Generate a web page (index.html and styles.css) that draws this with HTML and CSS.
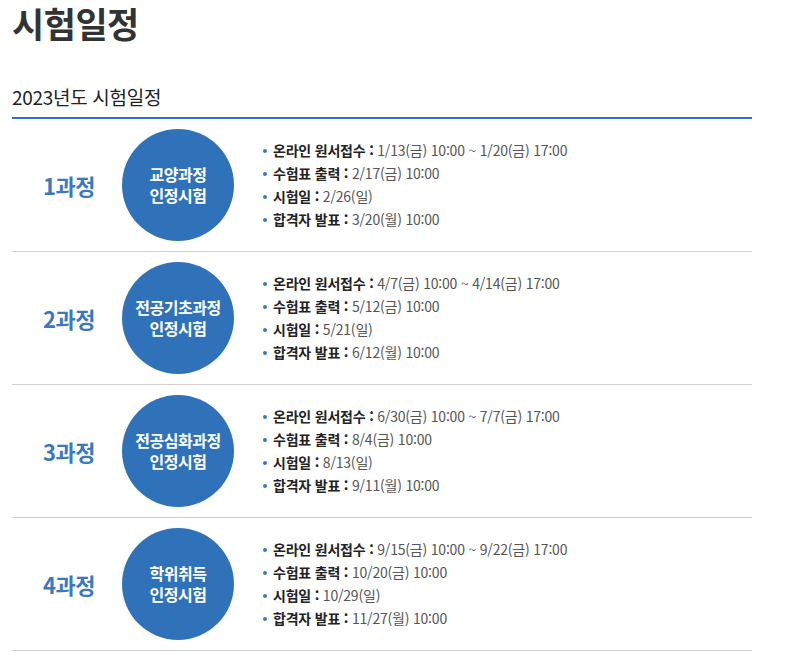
FILE: index.html
```html
<!DOCTYPE html>
<html lang="ko">
<head>
<meta charset="utf-8">
<title>시험일정</title>
<link rel="stylesheet" href="styles.css">
</head>
<body>
<div class="page">
  <h1 class="title">시험일정</h1>
  <h2 class="subtitle">2023년도 시험일정</h2>
  <div class="schedule">
    <div class="row">
      <div class="course">1과정</div>
      <div class="circle"><span>교양과정</span><span>인정시험</span></div>
      <ul class="items">
        <li><b>온라인 원서접수 :</b> 1/13(금) 10:00 ~ 1/20(금) 17:00</li>
        <li><b>수험표 출력 :</b> 2/17(금) 10:00</li>
        <li><b>시험일 :</b> 2/26(일)</li>
        <li><b>합격자 발표 :</b> 3/20(월) 10:00</li>
      </ul>
    </div>
    <div class="row">
      <div class="course">2과정</div>
      <div class="circle"><span>전공기초과정</span><span>인정시험</span></div>
      <ul class="items">
        <li><b>온라인 원서접수 :</b> 4/7(금) 10:00 ~ 4/14(금) 17:00</li>
        <li><b>수험표 출력 :</b> 5/12(금) 10:00</li>
        <li><b>시험일 :</b> 5/21(일)</li>
        <li><b>합격자 발표 :</b> 6/12(월) 10:00</li>
      </ul>
    </div>
    <div class="row">
      <div class="course">3과정</div>
      <div class="circle"><span>전공심화과정</span><span>인정시험</span></div>
      <ul class="items">
        <li><b>온라인 원서접수 :</b> 6/30(금) 10:00 ~ 7/7(금) 17:00</li>
        <li><b>수험표 출력 :</b> 8/4(금) 10:00</li>
        <li><b>시험일 :</b> 8/13(일)</li>
        <li><b>합격자 발표 :</b> 9/11(월) 10:00</li>
      </ul>
    </div>
    <div class="row">
      <div class="course">4과정</div>
      <div class="circle"><span>학위취득</span><span>인정시험</span></div>
      <ul class="items">
        <li><b>온라인 원서접수 :</b> 9/15(금) 10:00 ~ 9/22(금) 17:00</li>
        <li><b>수험표 출력 :</b> 10/20(금) 10:00</li>
        <li><b>시험일 :</b> 10/29(일)</li>
        <li><b>합격자 발표 :</b> 11/27(월) 10:00</li>
      </ul>
    </div>
  </div>
</div>
</body>
</html>
```
FILE: styles.css
```css
html, body {
  margin: 0;
  padding: 0;
  background: #fff;
}
body {
  font-family: "Noto Sans CJK KR", "Noto Sans", sans-serif;
  color: #333;
}
.page {
  width: 740px;
  padding: 0 12px;
}
.title {
  margin: 0;
  font-size: 35px;
  line-height: 46px;
  font-weight: 700;
  color: #333;
  letter-spacing: -0.5px;
}
.subtitle {
  margin: 38px 0 0;
  font-size: 19px;
  line-height: 26px;
  font-weight: 400;
  color: #222;
  padding-bottom: 7px;
  border-bottom: 2px solid #3072b9;
  letter-spacing: -0.3px;
}
.row {
  display: flex;
  align-items: center;
  padding: 10px 0;
  border-bottom: 1px solid #cfcfcf;
}
.course {
  width: 110px;
  box-sizing: border-box;
  padding-left: 31px;
  font-size: 22px;
  font-weight: 700;
  color: #3a79c2;
  letter-spacing: -0.5px;
}
.circle {
  width: 112px;
  height: 112px;
  border-radius: 50%;
  background: #3072b9;
  color: #fff;
  display: flex;
  flex-direction: column;
  align-items: center;
  justify-content: center;
  gap: 0;
  text-align: center;
  font-size: 16px;
  font-weight: 700;
  line-height: 21px;
  letter-spacing: -0.5px;
  flex: none;
}
.circle span {
  display: block;
  height: 21px;
}
.items {
  list-style: none;
  margin: 0 0 0 29px;
  padding: 0;
}
.items li {
  position: relative;
  padding-left: 10px;
  font-size: 14px;
  line-height: 23px;
  color: #555;
  letter-spacing: -0.2px;
}
.items li::before {
  content: "";
  position: absolute;
  left: 0;
  top: 10px;
  width: 4px;
  height: 4px;
  border-radius: 50%;
  background: #3a79c2;
}
.items b {
  color: #222;
  font-weight: 700;
}
```
